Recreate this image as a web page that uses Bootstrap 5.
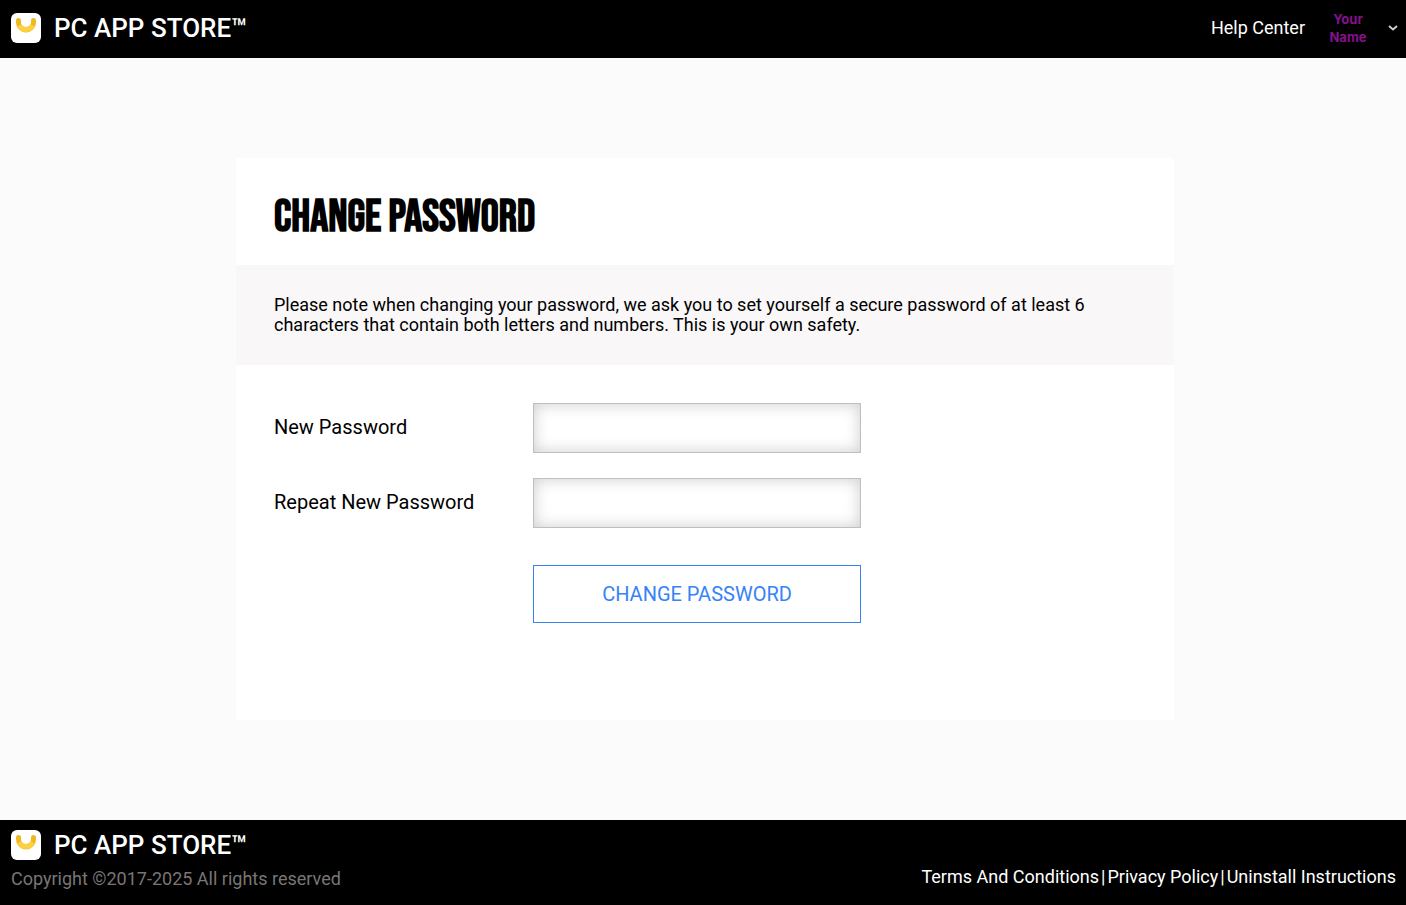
<!DOCTYPE html>
<html lang="en">
<head>
<meta charset="utf-8">
<meta name="viewport" content="width=device-width, initial-scale=1">
<title>Change Password</title>
<link href="https://cdn.jsdelivr.net/npm/bootstrap@5.3.0/dist/css/bootstrap.min.css" rel="stylesheet">
<style>
body{font-family:Roboto,"Liberation Sans",sans-serif;background:#fbfbfb;color:#000;font-size:18px;line-height:20px}
.site-bar{background:#000;color:#fff}
.site-bar a{color:#fff;text-decoration:none}
.site-header{padding:10px 8px 12px 11px}
.site-footer{padding:9px 10px 16px 11px}
.brand-link{font-size:26px;line-height:32px;font-weight:500;gap:13px}
.brand-logo{width:30px;height:30px}
.account{gap:23px}
.user-menu{gap:20px;border:0;background:none;padding:0}
.user-name{font-family:Inter,"Liberation Sans",sans-serif;font-size:13px;line-height:18px;font-weight:700;color:#86118c;width:40px}
.copyright{color:#7a7575;margin-top:8px}
.legal-links{gap:2px;padding-bottom:2px}
.page-body{padding:100px 0 100px 4px}
.panel{max-width:938px;background:#fff;min-height:562px}
.panel h1{font-family:"Bebas Neue",Roboto,sans-serif;font-size:45px;font-weight:700;line-height:50px;padding:35px 38px 22px}
.notice{background:#f9f7f8;padding:30px 38px}
.form-area{padding:38px}
.form-row{margin-bottom:25px}
.form-row label{width:259px;font-size:20px;line-height:24px;padding-bottom:2px}
.field{width:328px;height:50px;border:1px solid #bfbfbf;border-radius:0;box-shadow:inset 0 0 15px #ccc}
.submit{width:328px;height:58px;margin:12px 0 0 259px;border:1px solid #3683f7;border-radius:0;color:#3683f7;font-size:20px;background:#fff}
</style>
</head>
<body class="d-flex flex-column min-vh-100">
<svg width="0" height="0" class="position-absolute" aria-hidden="true">
<symbol id="logo" viewBox="0 0 30 30">
<rect width="30" height="30" rx="6" fill="#fff"/>
<path d="M7.5 7.5v2a7.5 7.5 0 0 0 15 0v-2" fill="none" stroke="#edb91e" stroke-width="5" stroke-linecap="round"/>
<path d="M8.3 12.4a7.5 7.5 0 0 0 13.4 0" fill="none" stroke="#fdd043" stroke-width="5"/>
</symbol>
</svg>
<header class="site-bar site-header d-flex justify-content-between align-items-center">
<a href="#" class="brand-link d-flex align-items-center"><svg class="brand-logo" aria-hidden="true"><use href="#logo"/></svg><span>PC APP STORE™</span></a>
<div class="account d-flex align-items-center">
<a href="#">Help Center</a>
<button type="button" class="user-menu d-flex align-items-center" aria-label="Account menu"><span class="user-name">Your Name</span>
<svg width="10" height="6" viewBox="0 0 10 6" aria-hidden="true"><path d="M1 1l4 3.5L9 1" fill="none" stroke="#ccc" stroke-width="2"/></svg></button>
</div>
</header>
<main class="page-body flex-grow-1">
<section class="panel mx-auto">
<h1 class="m-0">CHANGE PASSWORD</h1>
<p class="notice m-0">Please note when changing your password, we ask you to set yourself a secure password of at least 6 characters that contain both letters and numbers. This is your own safety.</p>
<form class="form-area">
<div class="form-row d-flex align-items-center"><label for="new-password">New Password</label><input id="new-password" type="password" class="form-control field"></div>
<div class="form-row d-flex align-items-center"><label for="repeat-password">Repeat New Password</label><input id="repeat-password" type="password" class="form-control field"></div>
<button type="button" class="btn submit">CHANGE PASSWORD</button>
</form>
</section>
</main>
<footer class="site-bar site-footer d-flex justify-content-between align-items-end">
<div>
<a href="#" class="brand-link d-flex align-items-center"><svg class="brand-logo" aria-hidden="true"><use href="#logo"/></svg><span>PC APP STORE™</span></a>
<div class="copyright">Copyright ©2017-2025 All rights reserved</div>
</div>
<nav class="legal-links d-flex" aria-label="Legal"><a href="#">Terms And Conditions</a><span>|</span><a href="#">Privacy Policy</a><span>|</span><a href="#">Uninstall Instructions</a></nav>
</footer>
<script src="https://cdn.jsdelivr.net/npm/bootstrap@5.3.0/dist/js/bootstrap.bundle.min.js"></script>
</body>
</html>
